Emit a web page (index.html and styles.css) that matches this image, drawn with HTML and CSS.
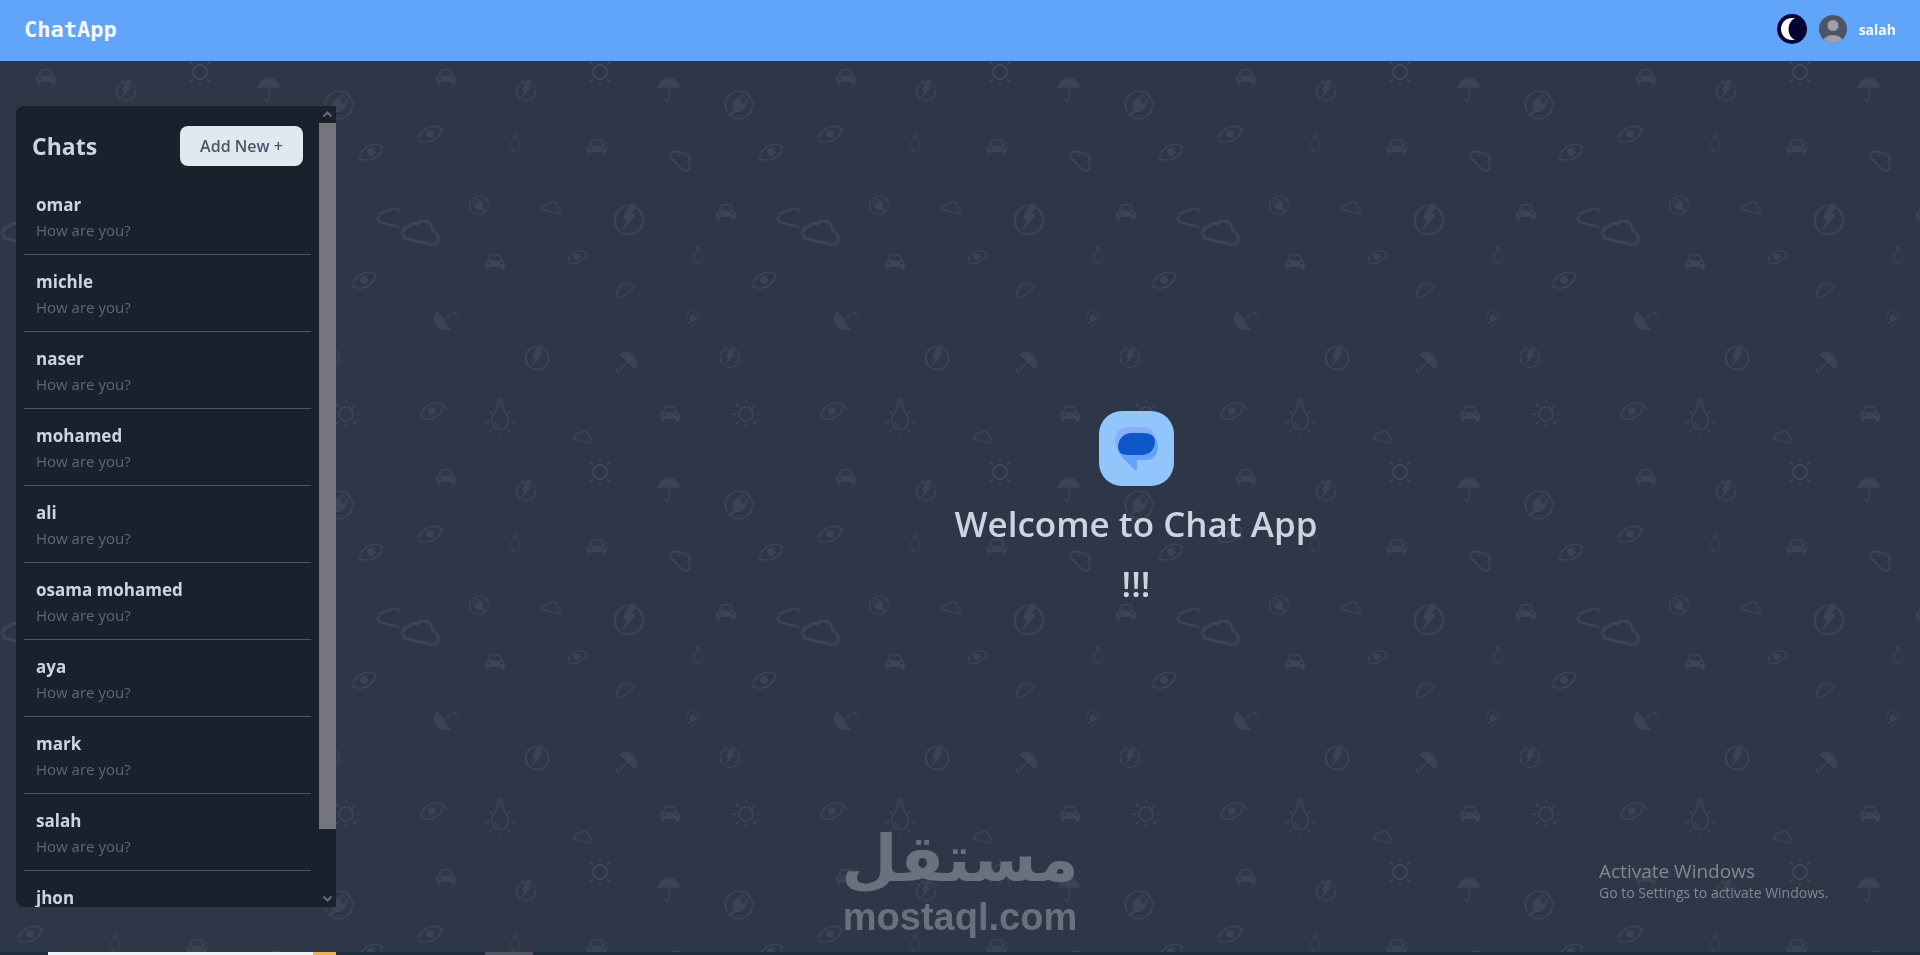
FILE: index.html
```html
<!DOCTYPE html>
<html lang="en">
<head>
    <meta charset="UTF-8">
    <meta name="viewport" content="width=device-width, initial-scale=1.0">
    <title>ChatApp</title>
    <link rel="stylesheet" href="styles.css">
</head>
<body>
    <svg class="wallpaper" aria-hidden="true">
        <defs>
            <g id="car">
                <path fill="currentColor" fill-rule="evenodd" d="M-7.500-1.500 L-5.800-6.500 Q-5.300-8-3.800-8 H3.800 Q5.300-8 5.800-6.500 L7.500-1.500 Q10-1 10 1 V5 H8.800 V7 Q8.800 8 7.500 8 Q6 8 6 7 V5 H-6 V7 Q-6 8-7.500 8 Q-8.800 8-8.800 7 V5 H-10 V1 Q-10-1-7.500-1.500Z M-5.800-1.500 H5.800 L4.500-5.800 Q4.300-6.500 3.500-6.500 H-3.500 Q-4.300-6.500-4.500-5.800Z M-6.500-.2 a1.400 1.400 0 1 0 .1 0Z M6.500-.2 a1.400 1.400 0 1 0 .1 0Z"/>
            </g>
            <g id="bolt">
                <circle r="9.500" fill="none" stroke="currentColor" stroke-width="1.400"/>
                <path fill="currentColor" stroke="#2d3748" stroke-width=".9" d="M0-11 H6.500 L2.700-4.500 H6 L-7 11 L-2-0 H-5Z"/>
            </g>
            <g id="sun" fill="none" stroke="currentColor" stroke-width="2" stroke-linecap="round">
                <circle r="7"/>
                <path d="M0-13V-11.500M0 13V11.500M-13 0H-11.500M13 0H11.500M-9.500-9.500L-8-8M9.500-9.500L8-8M-9.500 9.500L-8 8M9.500 9.500L8 8"/>
            </g>
            <g id="umbrella">
                <path fill="currentColor" d="M-11.500-1 Q-9-10.500-.5-11 V-12.500 H.5 V-11 Q9-10.500 11.500-1 Q8-2.500 5.500-1 Q3-2.500 0-1 Q-3-2.500-5.500-1 Q-8-2.500-11.500-1Z"/>
                <path fill="none" stroke="currentColor" stroke-width="1.400" stroke-linecap="round" d="M.3-2 V9.500 Q.3 12-2 12 Q-3.600 12-3.600 10"/>
                <path fill="none" stroke="#2d3748" stroke-width=".4" d="M-5.500-1.500 Q-4.500-8 0-10.500 Q4.500-8 5.500-1.500"/>
            </g>
            <g id="plug">
                <circle r="13.600" fill="none" stroke="currentColor" stroke-width="1.600"/>
                <g transform="rotate(38)">
                    <path fill="currentColor" d="M-6.500-4 H6.500 V1 Q6 6.500 1.500 7 V13 H-1.500 V7 Q-6 6.500-6.500 1Z"/>
                    <path stroke="currentColor" stroke-width="2" stroke-linecap="round" d="M-3.600-4V-10M3.600-4V-10"/>
                </g>
            </g>
            <g id="eye">
                <path fill="none" stroke="currentColor" stroke-width="1.600" stroke-linejoin="round" d="M-11.500 6.500 Q-9.500-5 1-7.500 Q7-8.500 11.800-5.500 Q9 5.500 0 7.700 Q-7 9-11.500 6.500Z"/>
                <circle r="3.800" fill="currentColor"/>
            </g>
            <g id="bulb" fill="none" stroke="currentColor" stroke-width="1.500">
                <path d="M-3-12 C-3-5-8.500-4-8.500 3 A8.500 8.500 0 0 0 8.500 3 C8.500-4 3-5 3-12Z"/>
                <path d="M-2.500-18.500H2.500M-3.500-16.500H3.500M-3.500-14.300H3.500M-15 4H-11M15 4H11M-10.500-6.500L-7.500-4M10.500-6.500L7.500-4M-10.500 14.500L-8 12M10.500 14.500L8 12M0 15V19M-5.500 3Q-5 7-1 9"/>
            </g>
            <path id="cloud" fill="none" stroke="currentColor" stroke-width="3" stroke-linejoin="round" d="M-14.500 5.500 C-20.500 3-19-6.500-12-6.500 C-10-10.500-6-9.500-4.500-8.500 C0-14.500 12-12.500 11.500-3 C19 1 20 13 9.500 11.300Z"/>
            <pattern id="weather" width="400" height="400" y="50" patternUnits="userSpaceOnUse">
                <use href="#car" x="46" y="27"/>
                <use href="#bolt" x="126" y="41"/>
                <use href="#sun" x="200" y="22"/>
                <use href="#umbrella" x="269" y="39"/>
                <use href="#plug" x="339" y="55"/>
                <use href="#eye" x="30" y="84"/>
                <use href="#bulb" transform="translate(115 95) scale(.56)"/>
                <use href="#car" x="197" y="97"/>
                <use href="#cloud" transform="translate(281 110) rotate(32) scale(.66)"/>
                <use href="#eye" x="371" y="102"/>
                <use href="#plug" transform="translate(79 155) rotate(-80) scale(.7)"/>
                <use href="#cloud" transform="translate(152 158) scale(.48)"/>
                <use href="#bolt" transform="translate(229 170) scale(1.500)"/>
                <use href="#car" x="326" y="162"/>
                <use href="#cloud" transform="translate(392 168) scale(.78)"/>
                <use href="#cloud" x="21" y="183"/>
                <use href="#car" x="95" y="212"/>
                <use href="#eye" transform="translate(177 207) scale(.8)"/>
                <use href="#bulb" transform="translate(298 207) scale(.56)"/>
                <use href="#eye" x="364" y="230"/>
                <use href="#cloud" transform="translate(224 240) rotate(-48) scale(.5)"/>
                <use href="#umbrella" transform="translate(45 269) rotate(-123)"/>
                <use href="#plug" transform="translate(293 268) scale(.5)"/>
                <use href="#bolt" transform="translate(137 308) scale(1.200)"/>
                <use href="#umbrella" transform="translate(226 313) rotate(42)"/>
                <use href="#bolt" x="330" y="308"/>
                <use href="#eye" x="32" y="361"/>
                <use href="#bulb" x="100" y="368"/>
                <use href="#car" x="270" y="364"/>
                <use href="#sun" x="346" y="364"/>
                <use href="#cloud" transform="translate(183 387) scale(.48)"/>
            </pattern>
        </defs>
        <rect width="100%" height="100%" fill="url(#weather)"/>
    </svg>

    <header class="navbar">
        <a class="brand" href="#">ChatApp</a>
        <div class="nav-user">
            <button class="theme-button" aria-label="Dark mode">
                <svg width="30" height="30" viewBox="0 0 30 30">
                    <circle cx="15" cy="15" r="15" fill="#020235"/>
                    <path fill="#fff" d="M18 4.200 C8 2.500 4 10 4 15 S8 27.500 18 25.800 C9.500 22 9.500 8 18 4.200Z"/>
                </svg>
            </button>
            <svg class="avatar" width="28" height="28" viewBox="0 0 28 28">
                <clipPath id="round"><circle cx="14" cy="14" r="14"/></clipPath>
                <g clip-path="url(#round)">
                    <rect width="28" height="28" fill="#4b5566"/>
                    <circle cx="14" cy="10.500" r="5.500" fill="#9ca0a9"/>
                    <ellipse cx="14" cy="27" rx="10" ry="7" fill="#9ca0a9"/>
                </g>
            </svg>
            <span class="username">salah</span>
        </div>
    </header>

    <div class="content">
        <aside class="sidebar">
            <div class="sidebar-inner">
                <div class="sidebar-header">
                    <h2>Chats</h2>
                    <button class="add-button">Add New +</button>
                </div>
                <nav class="chat-list">
                    <a class="chat" href="#"><strong>omar</strong><span>How are you?</span></a>
                    <a class="chat" href="#"><strong>michle</strong><span>How are you?</span></a>
                    <a class="chat" href="#"><strong>naser</strong><span>How are you?</span></a>
                    <a class="chat" href="#"><strong>mohamed</strong><span>How are you?</span></a>
                    <a class="chat" href="#"><strong>ali</strong><span>How are you?</span></a>
                    <a class="chat" href="#"><strong>osama mohamed</strong><span>How are you?</span></a>
                    <a class="chat" href="#"><strong>aya</strong><span>How are you?</span></a>
                    <a class="chat" href="#"><strong>mark</strong><span>How are you?</span></a>
                    <a class="chat" href="#"><strong>salah</strong><span>How are you?</span></a>
                    <a class="chat" href="#"><strong>jhon</strong></a>
                </nav>
            </div>
            <div class="scrollbar" aria-hidden="true">
                <svg width="17" height="17" viewBox="0 0 17 17"><path d="M4.500 10.500l4-4 4 4"/></svg>
                <div class="scroll-track"><div class="scroll-thumb"></div></div>
                <svg width="17" height="17" viewBox="0 0 17 17"><path d="M4.500 6.500l4 4 4-4"/></svg>
            </div>
        </aside>

        <main class="welcome">
            <svg class="logo" width="75" height="75" viewBox="0 0 75 75">
                <rect width="75" height="75" rx="23" fill="#93c5fd"/>
                <path fill="#8aaef5" d="M29 16 H43 Q54 16 56 26 L40 43 H22 L18 37 Q16 34 16 29 Q17 17 29 16Z"/>
                <path fill="#60a5fa" d="M54 25 Q59 29 59 36 Q58 49 46 49 H38 V59 H36 L22 45 Q19 42 19 36Z"/>
                <path fill="#0d57c9" d="M32 22 H44 Q56 22 56 31 Q55 43 43 44 H28 Q19 43 19 36 Q20 23 32 22Z"/>
            </svg>
            <h1>Welcome to Chat App !!!</h1>
        </main>
    </div>

    <div class="watermark">
        <span class="watermark-arabic" lang="ar" dir="rtl">مستقل</span>
        <span class="watermark-latin">mostaql.com</span>
    </div>

    <div class="activate">
        <p class="activate-title">Activate Windows</p>
        <p class="activate-text">Go to Settings to activate Windows.</p>
    </div>

    <footer class="taskbar">
        <span class="task-search"></span>
        <span class="task-highlight"></span>
        <span class="task-active"></span>
    </footer>
</body>
</html>
```
FILE: styles.css
```css
* {
    box-sizing: border-box;
}
body {
    margin: 0;
    height: 100vh;
    display: flex;
    flex-direction: column;
    overflow: hidden;
    background: #2d3748;
    color: #cbd5e0;
    font-family: "Segoe UI", "Open Sans", "Noto Sans", sans-serif;
    font-size: 16px;
}
h1, h2, p {
    margin: 0;
}
a {
    color: inherit;
    text-decoration: none;
}
button {
    border: none;
    padding: 0;
    font-family: inherit;
    cursor: pointer;
}
.wallpaper {
    position: fixed;
    inset: 0;
    z-index: -1;
    width: 100%;
    height: 100%;
    color: #3b4454;
}

/* top bar */
.navbar {
    display: flex;
    flex: none;
    align-items: center;
    justify-content: space-between;
    height: 61px;
    padding: 0 24px 3px;
    background: #60a5fa;
    color: #f7fafc;
}
.brand {
    font-family: "DejaVu Sans Mono", monospace;
    font-size: 22px;
    font-weight: bold;
}
.nav-user {
    display: flex;
    align-items: center;
    gap: 12px;
}
.theme-button {
    display: flex;
    background: none;
}
.username {
    font-size: 14px;
    font-weight: bold;
}

.content {
    flex: 1;
    display: flex;
    min-height: 0;
}

/* chats */
.sidebar {
    flex: none;
    display: flex;
    width: 320px;
    margin: 45px 16px;
    overflow: hidden;
    background: #1a202c;
    border-radius: 8px 0 0 8px;
}
.sidebar-inner {
    flex: 1;
    padding: 20px 8px 0;
    overflow-y: auto;
    scrollbar-width: none;
}
.sidebar-header {
    display: flex;
    align-items: center;
    justify-content: space-between;
    padding: 0 8px 12px;
}
.sidebar-header h2 {
    font-size: 23px;
    line-height: 40px;
}
.add-button {
    width: 123px;
    height: 40px;
    border-radius: 8px;
    background: #e2e8f0;
    color: #4a5568;
    font-size: 16px;
    font-weight: 600;
}
.chat {
    display: block;
    padding: 13px 12px;
    border-bottom: 1px solid #4a5568;
}
.chat strong, .chat span {
    display: block;
}
.chat strong {
    font-size: 17px;
    line-height: 28px;
}
.chat span {
    color: #606875;
    font-size: 15px;
    line-height: 22px;
}
.scrollbar {
    flex: none;
    display: flex;
    flex-direction: column;
    width: 17px;
}
.scrollbar path {
    fill: none;
    stroke: #656a74;
    stroke-width: 2;
}
.scroll-track {
    flex: 1;
}
.scroll-thumb {
    height: 92%;
    background: #74767c;
}

/* empty state */
.welcome {
    flex: 1;
    display: flex;
    flex-direction: column;
    align-items: center;
    justify-content: center;
    gap: 8px;
    padding-top: 12px;
}
.welcome h1 {
    max-width: 376px;
    text-align: center;
    font-size: 35px;
    font-weight: 600;
    line-height: 60px;
}

/* overlays */
.watermark {
    position: fixed;
    bottom: 18px;
    left: 50%;
    transform: translateX(-50%);
    display: flex;
    flex-direction: column;
    align-items: center;
    color: #6a707c;
    font-weight: bold;
}
.watermark-arabic {
    font-family: "DejaVu Sans", sans-serif;
    font-size: 65px;
    line-height: 76px;
}
.watermark-latin {
    font-family: "Liberation Sans", Arial, sans-serif;
    font-size: 38px;
    line-height: 40px;
}
.activate {
    position: fixed;
    right: 85px;
    bottom: 52px;
    width: 236px;
    color: #85898f;
    white-space: nowrap;
}
.activate-title {
    font-size: 19px;
    line-height: 24px;
}
.activate-text {
    font-size: 14px;
    line-height: 20px;
}

.taskbar {
    display: flex;
    flex: none;
    height: 3px;
    padding-left: 48px;
    background: #1d2d3d;
}
.task-search {
    width: 265px;
    background: #edf2f7;
}
.task-highlight {
    width: 23px;
    background: #ecb552;
}
.task-active {
    width: 48px;
    margin-left: 149px;
    background: #4f5661;
}
```
